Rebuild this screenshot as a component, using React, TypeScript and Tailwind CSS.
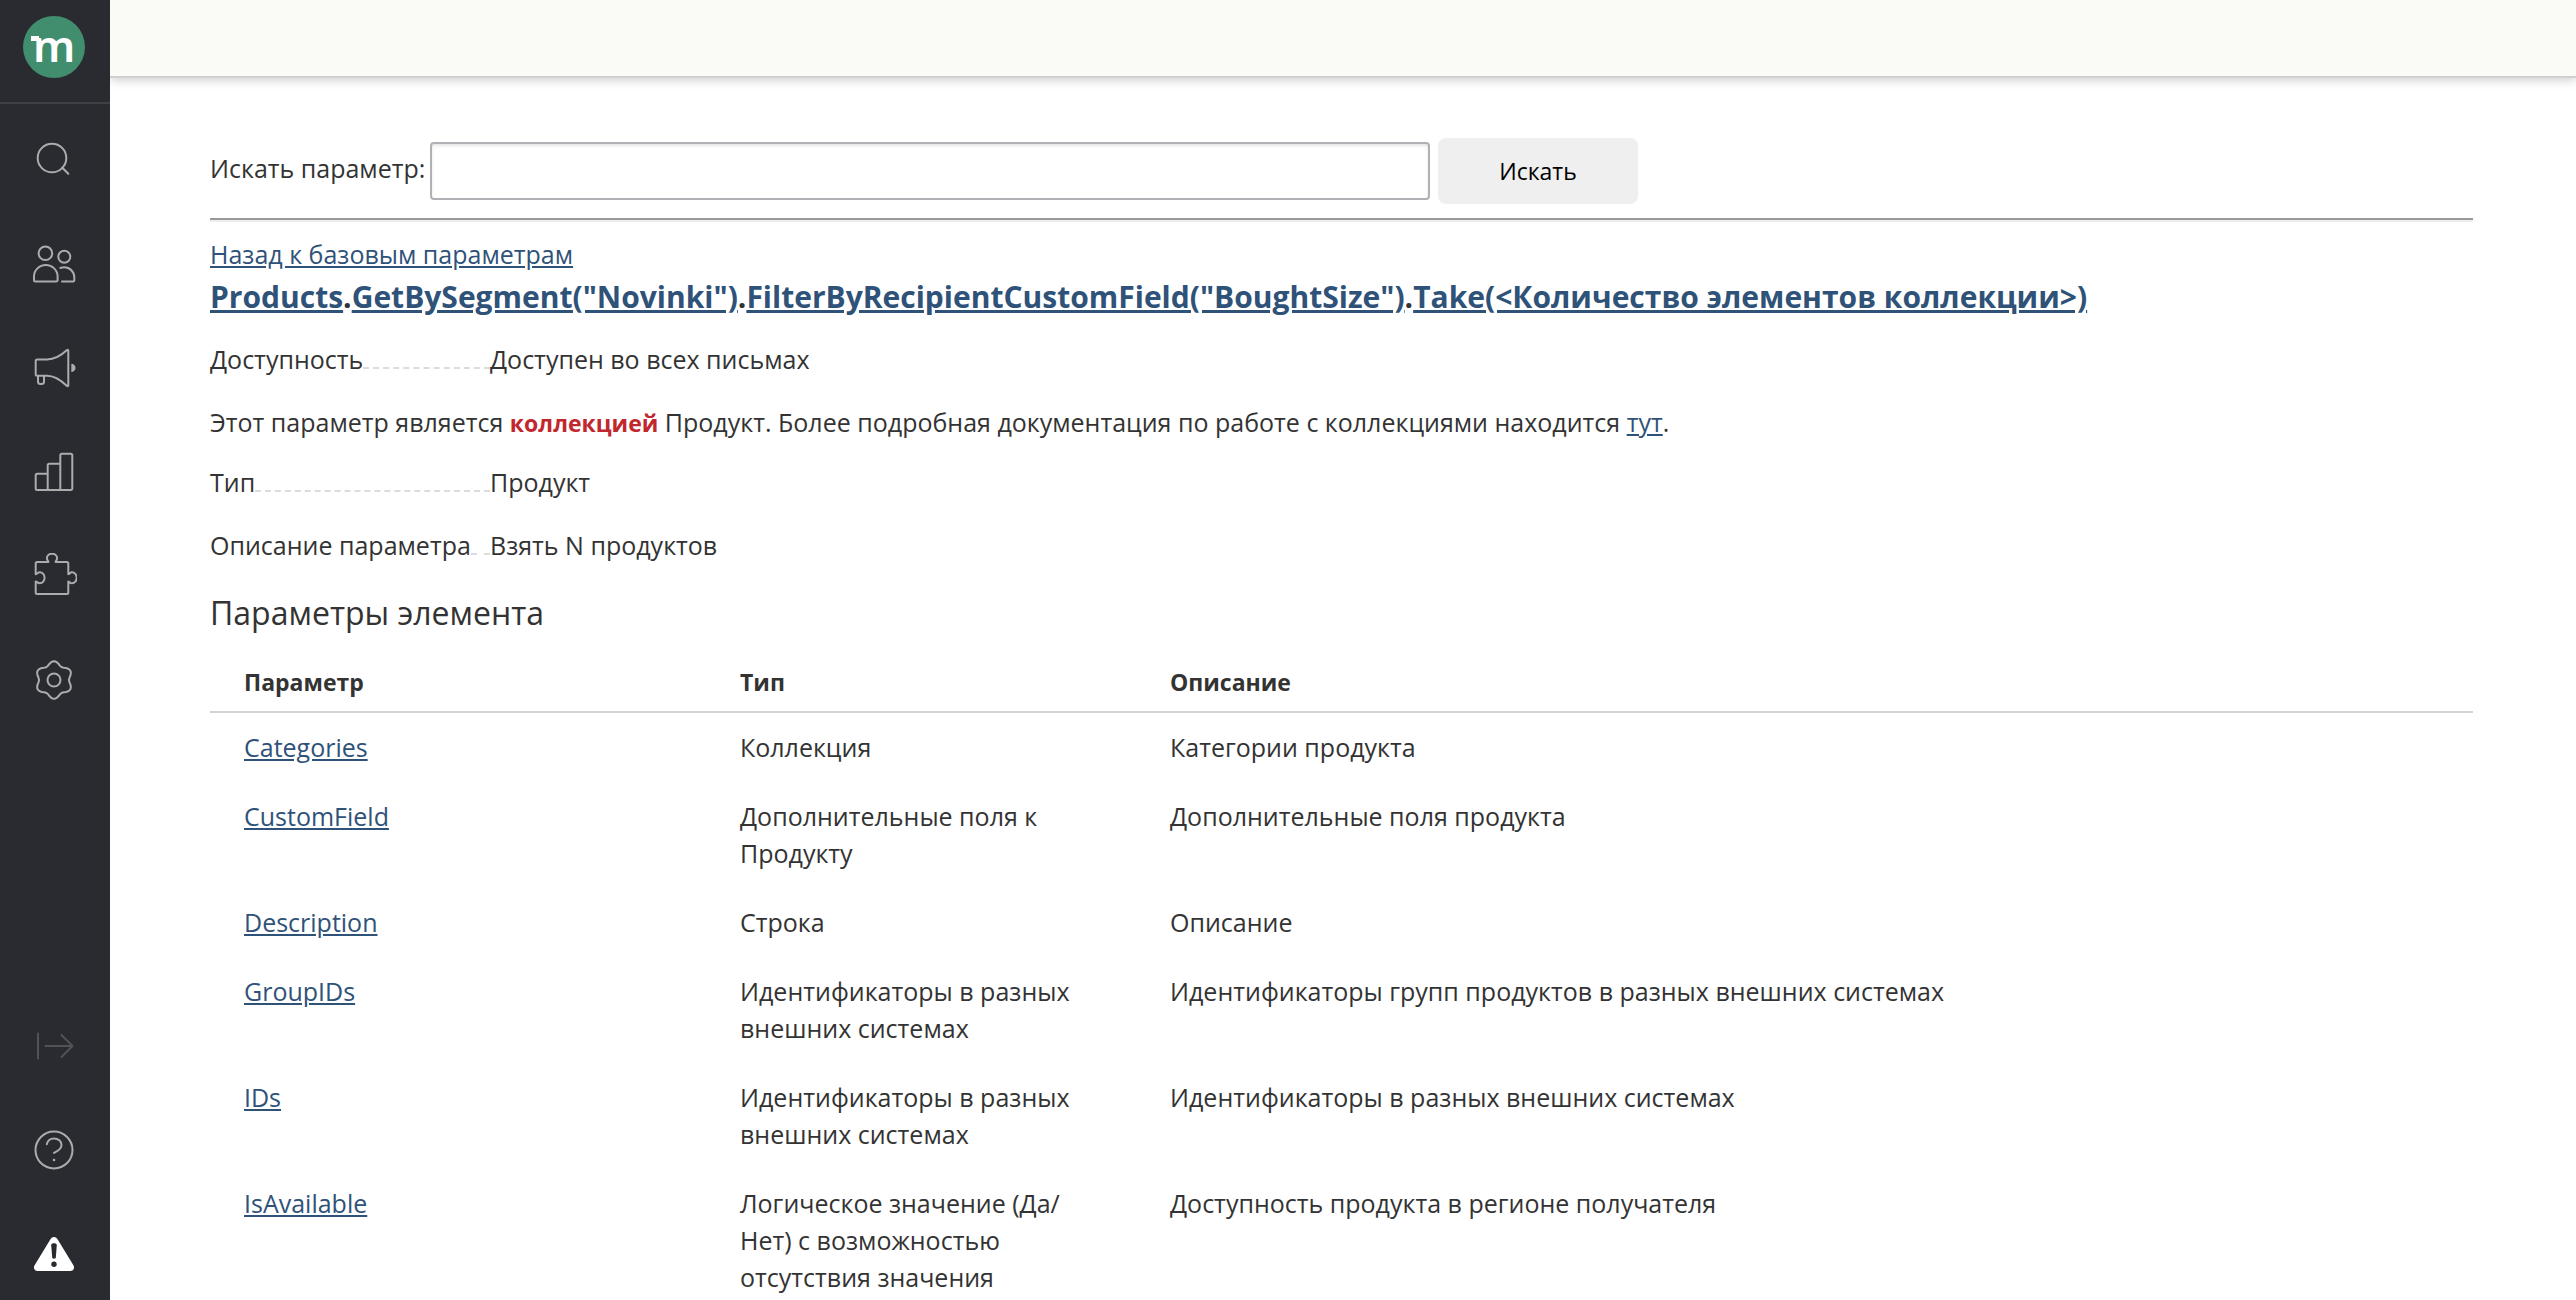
import type { ReactNode } from "react";

const parameters = [
  { name: "Categories", type: "Коллекция", description: "Категории продукта" },
  { name: "CustomField", type: "Дополнительные поля к Продукту", description: "Дополнительные поля продукта" },
  { name: "Description", type: "Строка", description: "Описание" },
  {
    name: "GroupIDs",
    type: "Идентификаторы в разных внешних системах",
    description: "Идентификаторы групп продуктов в разных внешних системах",
  },
  {
    name: "IDs",
    type: "Идентификаторы в разных внешних системах",
    description: "Идентификаторы в разных внешних системах",
  },
  {
    name: "IsAvailable",
    type: "Логическое значение (Да/Нет) с возможностью отсутствия значения",
    description: "Доступность продукта в регионе получателя",
  },
];

// six-lobed outline of the settings icon
const gearPath =
  Array.from({ length: 72 }, (_, i) => {
    const a = (i * Math.PI) / 36;
    const r = 16.9 + 1.9 * Math.cos(6 * a);
    return `${i ? "L" : "M"}${(21 + r * Math.sin(a)).toFixed(2)} ${(23 - r * Math.cos(a)).toFixed(2)}`;
  }).join("") + "Z";

const Icon = ({ children }: { children: ReactNode }) => (
  <svg
    viewBox="0 0 44 44"
    className="size-11"
    fill="none"
    stroke="currentColor"
    strokeWidth="2"
    strokeLinecap="round"
    strokeLinejoin="round"
    aria-hidden="true"
  >
    {children}
  </svg>
);

const topItems = [
  {
    label: "Поиск",
    icon: (
      <Icon>
        <circle cx="19" cy="21" r="14.3" />
        <path d="M29.3 30.7l6 6" />
      </Icon>
    ),
  },
  {
    label: "Клиенты",
    icon: (
      <Icon>
        <circle cx="12.4" cy="12.3" r="6.8" />
        <circle cx="31.3" cy="15.7" r="6" />
        <path d="M1 35.5a11.8 11.5 0 0 1 23.6 0V39a1.5 1.5 0 0 1-1.5 1.5H2.5A1.5 1.5 0 0 1 1 39z" />
        <path d="M27.3 27q1.8-.7 4-.7a10 10 0 0 1 10 10V39a1.5 1.5 0 0 1-1.5 1.5H29" />
      </Icon>
    ),
  },
  {
    label: "Рассылки",
    icon: (
      <Icon>
        <path d="M4.2 14.5H14c7.5 0 14.5-4.2 20-9.4.5-.5 1.3-.3 1.3.5v34.8c0 .8-.8 1-1.3.5-5.5-5.2-12.5-10.2-20-10.2H4.2a1.5 1.5 0 0 1-1.5-1.5V16a1.5 1.5 0 0 1 1.5-1.5z" />
        <path d="M5 31v5.5a2.5 2.5 0 0 0 2.5 2.5h1a2.5 2.5 0 0 0 2.5-2.5V31" />
        <path d="M38.3 18.7a4.2 4.2 0 0 1 0 8.4z" fill="currentColor" stroke="none" />
      </Icon>
    ),
  },
  {
    label: "Отчёты",
    icon: (
      <Icon>
        <path d="M14.7 24.7H4.2a1.5 1.5 0 0 0-1.5 1.5v13.3A1.5 1.5 0 0 0 4.2 41h33.6a1.5 1.5 0 0 0 1.5-1.5V6.2a1.5 1.5 0 0 0-1.5-1.5h-9a1.5 1.5 0 0 0-1.5 1.5V41M14.7 41V16.2a1.5 1.5 0 0 1 1.5-1.5h11.1" />
      </Icon>
    ),
  },
  {
    label: "Интеграции",
    icon: (
      <Icon>
        <path d="M4.2 9h11.2c0-1.3-1.5-1.9-1.5-3.8a5.1 4.5 0 0 1 10.2 0c0 1.9-1.5 2.5-1.5 3.8h11.2A1.5 1.5 0 0 1 35.3 10.5v10.7c1.2 0 1.6-1.9 3.7-1.9a4.7 5.5 0 0 1 0 11c-2.1 0-2.5-1.9-3.7-1.9v11.1a1.5 1.5 0 0 1-1.5 1.5H4.2a1.5 1.5 0 0 1-1.5-1.5V28.4c1.2 0 1.9 1.9 4.2 1.9a4.7 5.5 0 0 0 0-11c-2.3 0-3 1.9-4.2 1.9V10.5A1.5 1.5 0 0 1 4.2 9z" />
      </Icon>
    ),
  },
  {
    label: "Настройки",
    icon: (
      <Icon>
        <path d={gearPath} />
        <circle cx="21" cy="23" r="6.5" />
      </Icon>
    ),
  },
];

const Sidebar = () => {
  return (
    <aside className="w-[110px] shrink-0 h-screen sticky top-0 flex flex-col items-center bg-[#2a2b30] text-[#acacae]">
      <a href="#" aria-label="Главная" className="w-full h-[104px] pt-4 pr-0.5 flex justify-center items-start border-b-2 border-[#3f4045]">
        <span className="relative size-[62px] rounded-full bg-[#418e6f] flex justify-center font-['Noto_Sans',sans-serif] text-[44px] font-semibold leading-[58px] text-white">
          m
          <span className="absolute left-2 top-5 w-2 h-[5px] bg-white" />
        </span>
      </a>
      <nav className="flex-1 flex flex-col justify-between pt-[33px] pb-6">
        <div className="flex flex-col gap-[60px]">
          {topItems.map((item) => (
            <a key={item.label} href="#" aria-label={item.label}>
              {item.icon}
            </a>
          ))}
        </div>
        <div className="flex flex-col gap-[60px]">
          <button type="button" aria-label="Развернуть меню" className="text-[#515256]">
            <Icon>
              <path d="M5 9.5v25M12.5 22h27M28.5 11l11 11-11 11" />
            </Icon>
          </button>
          <a href="#" aria-label="Помощь">
            <Icon>
              <circle cx="21" cy="22" r="18.5" />
              <path d="M13.8 16.3c.8-3.6 3.6-5.8 7.2-5.8 4.2 0 7.5 2.6 7.5 6.4 0 4.6-4.3 6.3-7.5 8" />
              <circle cx="21" cy="32" r="1.3" fill="currentColor" stroke="none" />
            </Icon>
          </a>
          <a href="#" aria-label="Предупреждения" className="text-white">
            <Icon>
              <path d="M17.6 7c1.5-2.7 5.3-2.7 6.8 0l16 26.3c1.6 2.7.2 5.7-3 5.7H4.6c-3.2 0-4.6-3-3-5.7z" fill="currentColor" stroke="none" />
              <path d="M18.2 13c0-2.3 5.6-2.3 5.6 0l-1 12.5c-.2 1.6-3.4 1.6-3.6 0z" fill="#2a2b30" stroke="none" />
              <circle cx="21" cy="32.3" r="2.7" fill="#2a2b30" stroke="none" />
            </Icon>
          </a>
        </div>
      </nav>
    </aside>
  );
};

const Property = ({ label, children }: { label: string; children: ReactNode }) => (
  <div className="flex">
    <dt className="w-[280px] flex items-baseline">
      {label}
      <span className="flex-1 border-b-2 border-dashed border-[#dcdcdc]" />
    </dt>
    <dd>{children}</dd>
  </div>
);

const link = "text-[#2f5279] underline";

const App = () => {
  return (
    <div className="flex min-h-screen bg-white font-['Open_Sans','Noto_Sans',sans-serif] text-[25px] leading-[37px] text-[#333]">
      <Sidebar />
      <div className="flex-1 min-w-0 h-screen overflow-hidden">
        <header className="h-[78px] bg-[#fafaf6] border-b-2 border-[#d0d0ce] shadow-[0_2px_10px_rgba(0,0,0,0.2)]" />
        <main className="pt-[60px] pl-[100px] pr-[103px]">
          <form className="flex items-center gap-2" onSubmit={(e) => e.preventDefault()}>
            <label htmlFor="query" className="w-[212px] pb-1.5 whitespace-nowrap">
              Искать параметр:
            </label>
            <input
              id="query"
              type="text"
              className="w-[1000px] h-[58px] px-3 border-2 border-[#b0b0b5] rounded-sm shadow-[inset_0_2px_3px_rgba(0,0,0,0.1)] outline-none"
            />
            <button type="submit" className="w-[200px] h-[66px] rounded-lg bg-[#efefef] text-[23px] text-black">
              Искать
            </button>
          </form>
          <hr className="mt-3.5 h-1 border-0 border-t-2 border-t-[#999] bg-[#eee]" />

          <a href="#" className={`${link} block w-fit mt-3.5`}>
            Назад к базовым параметрам
          </a>
          <h1 className="text-[30px] leading-[48px] font-bold">
            <a href="#" className={link}>Products</a>.
            <a href="#" className={link}>GetBySegment("Novinki")</a>.
            <a href="#" className={link}>FilterByRecipientCustomField("BoughtSize")</a>.
            <a href="#" className={link}>Take(&lt;Количество элементов коллекции&gt;)</a>
          </h1>

          <dl className="mt-5">
            <Property label="Доступность">Доступен во всех письмах</Property>
          </dl>
          <p className="mt-[26px]">
            Этот параметр является <strong className="text-[23px] text-[#c1272d]">коллекцией</strong> Продукт. Более
            подробная документация по работе с коллекциями находится <a href="#" className={link}>тут</a>.
          </p>
          <dl className="mt-[22px] flex flex-col gap-[26px]">
            <Property label="Тип">Продукт</Property>
            <Property label="Описание параметра">Взять N продуктов</Property>
          </dl>

          <h2 className="mt-[26px] text-[32px] leading-[46px]">Параметры элемента</h2>
          <table className="mt-4 w-full table-fixed text-left">
            <thead>
              <tr className="border-b-2 border-[#d3d3d3] text-[23px]">
                <th className="w-[496px] pt-3 pb-2.5 px-[34px]">Параметр</th>
                <th className="w-[430px] pt-3 pb-2.5 px-[34px]">Тип</th>
                <th className="pt-3 pb-2.5 px-[34px]">Описание</th>
              </tr>
            </thead>
            <tbody>
              {parameters.map((p) => (
                <tr key={p.name} className="align-top">
                  <td className="py-4 px-[34px]">
                    <a href="#" className={link}>{p.name}</a>
                  </td>
                  <td className="py-4 px-[34px]">{p.type}</td>
                  <td className="py-4 px-[34px]">{p.description}</td>
                </tr>
              ))}
            </tbody>
          </table>
        </main>
      </div>
    </div>
  );
};

export default App;
